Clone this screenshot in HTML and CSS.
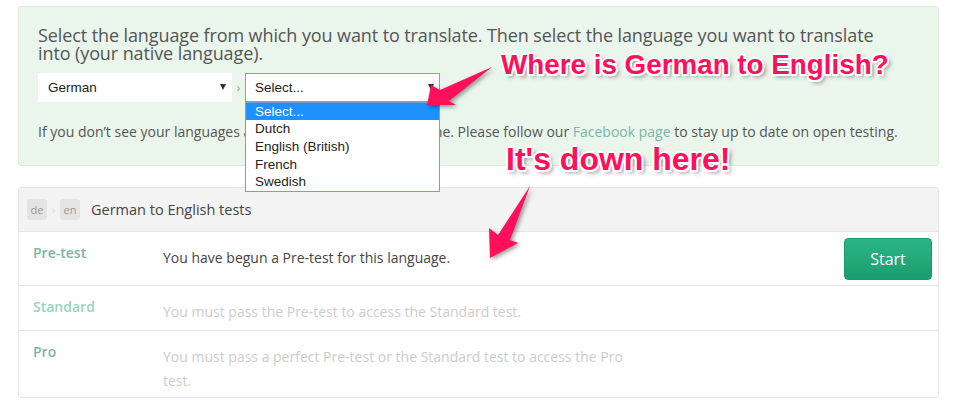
FILE: index.html
```html
<!DOCTYPE html>
<html lang="en">
<head>
<meta charset="utf-8">
<title>Language tests</title>
<link rel="stylesheet" href="styles.css">
</head>
<body>
<div class="page">
  <section class="picker">
    <h2 class="picker-title">Select the language from which you want to translate. Then select the language you want to translate into (your native language).</h2>
    <div class="lang-row">
      <div class="select select-from"><span>German</span><span class="caret"></span></div>
      <span class="sep">›</span>
      <div class="select select-to"><span>Select...</span><span class="caret"></span>
        <ul class="dropdown">
          <li class="active">Select...</li>
          <li>Dutch</li>
          <li>English (British)</li>
          <li>French</li>
          <li>Swedish</li>
        </ul>
      </div>
    </div>
    <p class="picker-note">If you don’t see your languages above, check back another time. Please follow our <a href="#">Facebook page</a> to stay up to date on open testing.</p>
  </section>

  <section class="tests">
    <header class="tests-head">
      <span class="badge">de</span><span class="chev">›</span><span class="badge">en</span>
      <h3 class="tests-title">German to English tests</h3>
    </header>
    <div class="test-row">
      <div class="test-name">Pre-test</div>
      <p class="test-desc">You have begun a Pre-test for this language.</p>
      <button class="start">Start</button>
    </div>
    <div class="test-row locked standard">
      <div class="test-name">Standard</div>
      <p class="test-desc">You must pass the Pre-test to access the Standard test.</p>
    </div>
    <div class="test-row locked">
      <div class="test-name">Pro</div>
      <p class="test-desc">You must pass a perfect Pre-test or the Standard test to access the Pro test.</p>
    </div>
  </section>

  <p class="callout callout-top">Where is German to English?</p>
  <p class="callout callout-bottom">It's down here!</p>

  <svg class="arrows" width="960" height="413" viewBox="0 0 960 413" aria-hidden="true">
    <polygon class="arrow" points="427,105 431,85 440,90 492,67 449,101 456,105"/>
    <polygon class="arrow" points="490,258 489,228 498,235 530,186 510,240 518,243"/>
  </svg>
</div>
</body>
</html>
```

FILE: styles.css
```css
html, body {
  margin: 0;
  background: #fff;
}

body {
  font-family: "Open Sans", "DejaVu Sans", sans-serif;
  color: #555;
}

.page {
  position: relative;
  width: 960px;
  height: 413px;
  overflow: hidden;
  box-sizing: border-box;
  padding: 6px 21px 0 18px;
}

/* ---------- language picker ---------- */
.picker {
  background: #eaf6ec;
  border: 1px solid #d9edda;
  border-radius: 3px;
  padding: 19px 19px 23px 19px;
}

.picker-title {
  margin: 0 0 10px;
  max-width: 850px;
  font-size: 18px;
  letter-spacing: -0.1px;
  line-height: 18.4px;
  font-weight: 400;
  color: #555;
}

.lang-row {
  display: flex;
  align-items: center;
  height: 29px;
}

.select {
  position: relative;
  height: 29px;
  box-sizing: border-box;
  display: flex;
  align-items: center;
  justify-content: space-between;
  padding: 0 6px 0 10px;
  background: #fff;
  font-family: "Liberation Sans", Arial, sans-serif;
  font-size: 13.5px;
  color: #222;
}

.select-from {
  width: 194px;
}

.select-to {
  width: 195px;
  border: 1px solid #7ea2dc;
  padding-left: 9px;
  padding-right: 5px;
}

.caret {
  width: 0;
  height: 0;
  border-left: 3.5px solid transparent;
  border-right: 3.5px solid transparent;
  border-top: 6px solid #333;
}

.sep {
  width: 13px;
  text-align: center;
  font-size: 12px;
  color: #999;
}

.dropdown {
  position: absolute;
  left: -1px;
  top: 28px;
  width: 195px;
  box-sizing: border-box;
  margin: 0;
  padding: 0;
  list-style: none;
  background: #fff;
  border: 1px solid #7b9bd6;
  z-index: 2;
}

.dropdown li {
  height: 17.6px;
  line-height: 17.6px;
  padding-left: 9px;
  font-size: 13.5px;
  color: #222;
}

.dropdown li.active {
  background: #1e90ff;
  color: #fff;
}

.picker-note {
  margin: 20px 0 0;
  font-size: 14px;
  line-height: 20px;
  color: #555;
}

.picker-note a {
  color: #7bb5a6;
  text-decoration: none;
}

/* ---------- tests panel ---------- */
.tests {
  margin-top: 21px;
  border: 1px solid #e4e4e4;
  border-radius: 3px;
}

.tests-head {
  height: 43px;
  display: flex;
  align-items: center;
  padding-left: 8px;
  background: #f3f3f3;
  border-bottom: 1px solid #e6e6e6;
  border-radius: 3px 3px 0 0;
}

.badge {
  width: 20px;
  height: 21px;
  display: flex;
  align-items: center;
  justify-content: center;
  background: #e4e4e4;
  border-radius: 3px;
  font-size: 11px;
  color: #999;
}

.chev {
  width: 13px;
  text-align: center;
  font-size: 13px;
  color: #ddd;
}

.tests-title {
  margin: 0 0 0 11px;
  font-size: 14.5px;
  font-weight: 400;
  color: #444;
}

.test-row {
  display: flex;
  align-items: flex-start;
  padding: 6px 6px 5px 14px;
  border-bottom: 1px solid #e8e8e8;
}

.test-row:last-child {
  border-bottom: 0;
  padding-bottom: 3px;
}

.test-name {
  width: 130px;
  margin-top: 5px;
  font-size: 14px;
  line-height: 20px;
  font-weight: 600;
  color: #79b6a3;
}

.standard .test-name {
  color: #93d6bd;
}

.test-desc {
  width: 475px;
  margin: 8px 0 1px;
  font-size: 14px;
  line-height: 24px;
  color: #444;
}

.locked .test-desc {
  color: #cccccc;
}

.start {
  margin-left: auto;
  width: 88px;
  height: 42px;
  border: 1px solid #1b9a6c;
  border-radius: 4px;
  background: linear-gradient(#2ab687, #1c9d6f);
  color: #fff;
  font-family: "Open Sans", sans-serif;
  font-size: 16px;
  padding: 0;
}

/* ---------- annotations ---------- */
.callout {
  position: absolute;
  margin: 0;
  font-family: "Liberation Sans", Arial, sans-serif;
  font-weight: 700;
  line-height: 1;
  white-space: nowrap;
  color: #ff0f5c;
  z-index: 3;
  text-shadow:
    -2px 0 0 #fff, 2px 0 0 #fff, 0 -2px 0 #fff, 0 2px 0 #fff,
    -1.5px -1.5px 0 #fff, 1.5px -1.5px 0 #fff,
    -1.5px 1.5px 0 #fff, 1.5px 1.5px 0 #fff,
    3px 3px 4px rgba(0, 0, 0, 0.45);
}

.callout-top {
  left: 501px;
  top: 51px;
  font-size: 27.8px;
}

.callout-bottom {
  left: 506px;
  top: 143px;
  font-size: 32px;
}

.arrows {
  position: absolute;
  left: 0;
  top: 0;
  pointer-events: none;
  z-index: 4;
}

.arrow {
  fill: #ff0f5c;
  filter: drop-shadow(2px 2px 2px rgba(0, 0, 0, 0.4));
}
```
